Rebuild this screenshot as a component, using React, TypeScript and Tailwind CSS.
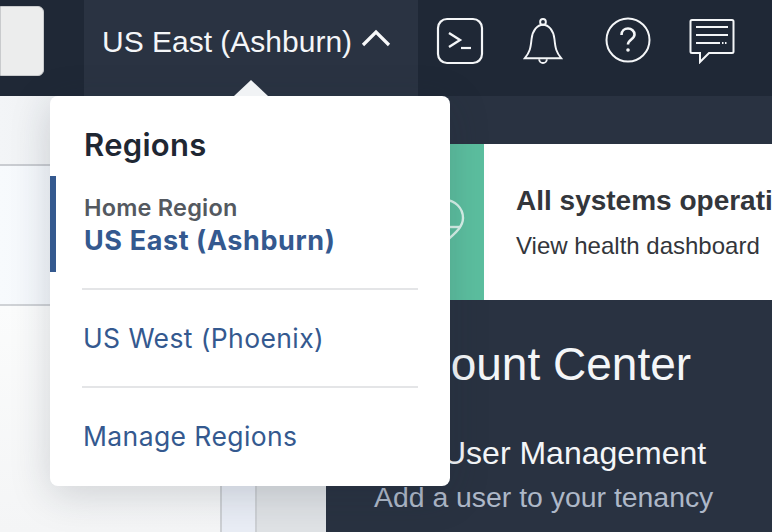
const regionLink = "text-[#34598f]";

const HeaderIcons = () => (
  <div className="flex items-start">
    <svg className="ml-[18px] mt-[17px]" width="48" height="48" viewBox="0 0 48 48" fill="none" stroke="#f4f6f8" strokeWidth="2.2">
      <rect x="2" y="2" width="44" height="44" rx="9" />
      <path d="M13 16l11 7-11 7" strokeWidth="2.4" />
      <path d="M25 31h10" strokeWidth="2.2" />
    </svg>
    <svg className="ml-[38px] mt-[16px]" width="42" height="50" viewBox="0 0 44 50" fill="none" stroke="#f4f6f8" strokeWidth="2">
      <circle cx="22" cy="5" r="3" />
      <path d="M3 43c5-6 6-10 7-20 1-9 6-15 12-15s11 6 12 15c1 10 2 14 7 20z" />
      <path d="M18 44a4 4 0 0 0 8 0" />
    </svg>
    <svg className="ml-[41px] mt-[17px]" width="46" height="46" viewBox="0 0 46 46" fill="none" stroke="#f4f6f8" strokeWidth="2">
      <circle cx="23" cy="23" r="21.5" />
      <path d="M16.5 18c0-4 3-6.500 6.500-6.500s6.500 2.500 6.500 6c0 5-6.500 5-6.500 10" strokeWidth="2.600" />
      <circle cx="23" cy="33" r="1.800" fill="#f4f6f8" stroke="none" />
    </svg>
    <svg className="ml-[38px] mt-[18px]" width="46" height="46" viewBox="0 0 46 46" fill="none" stroke="#f4f6f8" strokeWidth="2">
      <path d="M3 2h40a1.500 1.500 0 0 1 1.500 1.500v30a1.500 1.500 0 0 1-1.500 1.500H20l-9 9v-9H3a1.500 1.500 0 0 1-1.500-1.500v-30A1.500 1.500 0 0 1 3 2z" />
      <path d="M7 9h32M7 17h32M7 25h24" />
      <path d="M33 25h6" strokeDasharray="1.500 1.500" />
    </svg>
  </div>
);

const RegionsPopup = () => (
  <div className="absolute left-[50px] top-[96px] w-[400px] h-[390px] bg-white rounded-lg shadow-[0_8px_40px_rgba(30,40,55,0.18)] font-['Inter',sans-serif]">
    <div className="absolute left-[184px] top-[-16px] w-0 h-0 border-x-[17px] border-x-transparent border-b-[16px] border-b-[#f1f3f5]" />
    <h3 className="pl-[34px] pt-[31px] text-[31px] leading-[36px] font-semibold tracking-[0.3px] text-[#1f2733]">Regions</h3>
    <div className="mt-[13px] h-[96px] border-l-[6px] border-[#34598f] pl-[28px] pt-[17px]">
      <p className="text-[23.500px] leading-[30px] font-semibold tracking-[0.2px] text-[#545960]">Home Region</p>
      <p className="text-[27px] leading-[35px] font-bold tracking-[0.6px] text-[#34598f]">US East (Ashburn)</p>
    </div>
    <div className="mx-[32px] mt-[16px] border-t-2 border-[#e4e5e7]" />
    <p className={`pl-[33px] pt-[30px] pb-[30px] text-[26.500px] leading-[36px] tracking-[0.4px] ${regionLink}`}>US West (Phoenix)</p>
    <div className="mx-[32px] border-t-2 border-[#e4e5e7]" />
    <p className={`pl-[33px] pt-[30px] text-[26.500px] leading-[36px] tracking-[0.4px] ${regionLink}`}>Manage Regions</p>
  </div>
);

export default function App() {
  return (
    <div className="relative w-[772px] h-[532px] overflow-hidden bg-[#293241] font-['Liberation_Sans',sans-serif]">
      <header className="h-[96px] flex bg-[#1f2836]">
        <div className="w-[84px] pt-[6px]">
          <div className="w-[44px] h-[70px] rounded-r-[6px] bg-[#eceded] border border-[#c9cbcd]" />
        </div>
        <div className="w-[334px] h-full flex items-start bg-[#2a3342] pl-[18px] pt-[23px] gap-[9px] text-[#f4f6f8]">
          <span className="text-[30px] leading-[38px] whitespace-nowrap">US East (Ashburn)</span>
          <svg className="mt-[6px]" width="30" height="18" viewBox="0 0 30 18" fill="none" stroke="#f8f9fa" strokeWidth="3.200">
            <path d="M2 16L15 3l13 13" />
          </svg>
        </div>
        <HeaderIcons />
      </header>

      <main className="flex h-[436px]">
        <aside className="w-[326px] flex flex-col bg-white">
          <div className="h-[70px] bg-gradient-to-r from-[#f3f5f7] to-[#dfe2e6] border-b-2 border-[#c9ccd1]" />
          <div className="h-[140px] bg-gradient-to-r from-[#f7fafd] to-[#e6ebf3] border-b-2 border-[#cfd2d6]" />
          <div className="flex-1 flex bg-gradient-to-b from-[#fbfcfc] to-[#f4f5f6]">
            <div className="w-[220px]" />
            <div className="w-[37px] bg-[#e9edf5] border-x-2 border-[#cdd0d4]" />
            <div className="flex-1 bg-[#dfe2e5]" />
          </div>
        </aside>

        <section className="flex-1 min-w-0 pt-[48px] pl-[48px]">
          <div className="flex w-[500px] h-[156px] bg-white">
            <div className="w-[110px] h-full flex items-center justify-end bg-[#5cbf9f] pr-[19px]">
              <svg width="40" height="48" viewBox="0 0 40 48" fill="none" stroke="#d8f3ea" strokeWidth="2.400">
                <path d="M20 44C8 34 2 28 2 20a18 18 0 0 1 36 0c0 8-6 14-18 24z" />
                <path d="M4 29h32" />
              </svg>
            </div>
            <div className="pl-[32px] pt-[38px] whitespace-nowrap text-[#33363b]">
              <p className="text-[28px] leading-[38px] font-bold">All systems operational</p>
              <p className="mt-[10px] text-[24px] leading-[32px]">View health dashboard</p>
            </div>
          </div>
          <h2 className="mt-[36px] text-[46px] leading-[56px] text-[#f4f6f8] whitespace-nowrap">Account Center</h2>
          <p className="mt-[41px] pl-[69px] text-[32px] leading-[40px] text-[#f4f6f8] whitespace-nowrap">User Management</p>
          <p className="mt-[6px] text-[28.400px] leading-[36px] text-[#aeb8c8] whitespace-nowrap">Add a user to your tenancy</p>
        </section>
      </main>

      <RegionsPopup />
    </div>
  );
}
